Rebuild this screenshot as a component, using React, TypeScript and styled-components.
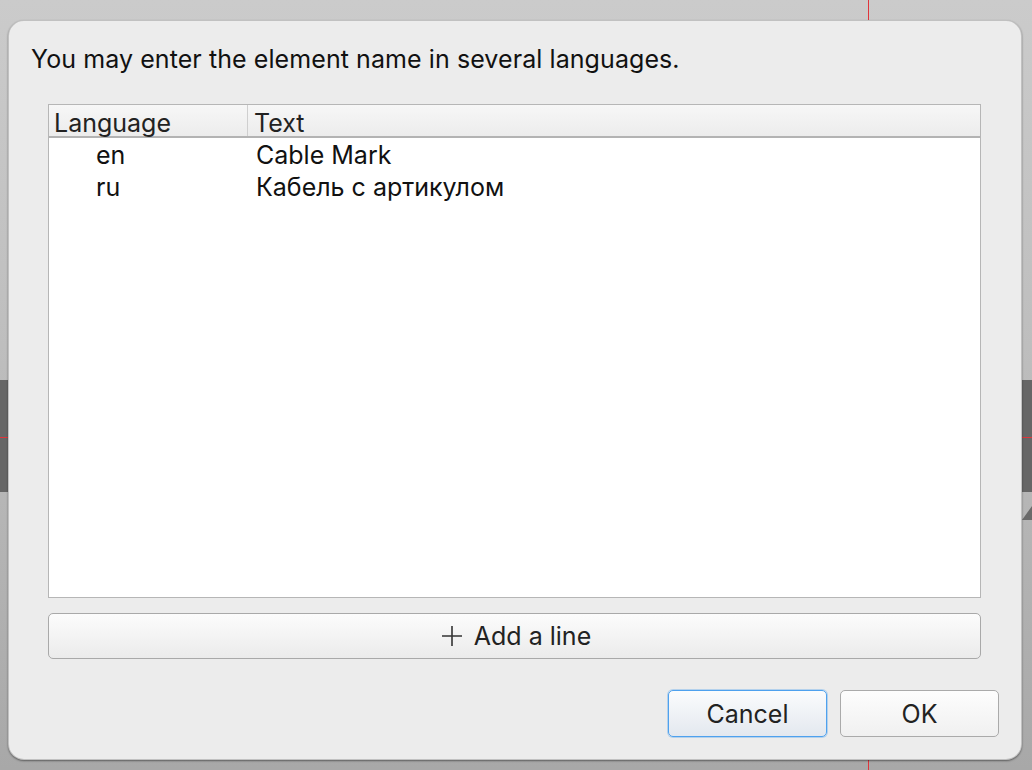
import React from 'react';
import styled, { createGlobalStyle } from 'styled-components';

const Global = createGlobalStyle`
  html, body { margin: 0; padding: 0; }
  body {
    width: 1032px;
    height: 770px;
    overflow: hidden;
    font-family: Inter, "Noto Sans", "Liberation Sans", sans-serif;
    color: #1a1a1a;
  }
  * { box-sizing: border-box; }
`;

const Desktop = styled.div`
  position: relative;
  width: 1032px;
  height: 770px;
  padding: 20px 10px 10px 8px;
  background: linear-gradient(180deg, #cbcbcb 0%, #bebebe 45%, #a8a8a8 100%);
  overflow: hidden;
`;

const DarkBand = styled.div`
  position: absolute;
  left: 0;
  right: 0;
  top: 380px;
  height: 112px;
  background: #666666;
`;

const RedLine = styled.div<{ $vertical?: boolean }>`
  position: absolute;
  background: #e0353b;
  ${(p) =>
    p.$vertical
      ? 'left: 868px; top: 0; bottom: 0; width: 1px;'
      : 'top: 437px; left: 0; right: 0; height: 1px;'}
`;

const Corner = styled.div`
  position: absolute;
  right: 0;
  top: 506px;
  width: 0;
  height: 0;
  border-left: 10px solid transparent;
  border-bottom: 14px solid #6a6a6a;
`;

const Dialog = styled.div`
  position: relative;
  z-index: 1;
  width: 1014px;
  height: 740px;
  border-radius: 16px;
  background: #ececec;
  border: 1px solid rgba(0, 0, 0, 0.18);
  box-shadow: 0 1px 2px rgba(0, 0, 0, 0.45);
  display: flex;
  flex-direction: column;
  padding: 0 22px 22px 39px;
`;

const Title = styled.div`
  margin: 22px 0 0 -17px;
  font-size: 25px;
  line-height: 32px;
  height: 32px;
  letter-spacing: 0.08px;
  color: #111;
`;

const Table = styled.div`
  margin-top: 29px;
  width: 933px;
  height: 494px;
  border: 1px solid #b6b6b6;
  background: #ffffff;
  display: flex;
  flex-direction: column;
`;

const HeaderRow = styled.div`
  display: grid;
  grid-template-columns: 199px 1fr;
  height: 33px;
  background: linear-gradient(180deg, #f7f7f7 0%, #ececec 100%);
  border-bottom: 2px solid #b3b3b3;
`;

const HeaderCell = styled.div<{ $divider?: boolean }>`
  font-size: 25px;
  line-height: 36px;
  height: 31px;
  overflow: visible;
  padding-left: ${(p) => (p.$divider ? '6px' : '5px')};
  color: #222;
  border-right: ${(p) => (p.$divider ? 'none' : '1px solid #cfcfcf')};
`;

const Row = styled.div`
  display: grid;
  grid-template-columns: 199px 1fr;
  height: 32px;
`;

const Cell = styled.div<{ $code?: boolean }>`
  font-size: 25px;
  line-height: 35px;
  height: 32px;
  padding-left: ${(p) => (p.$code ? '47px' : '8px')};
  color: #111;
`;

const AddButton = styled.button`
  margin-top: 15px;
  width: 933px;
  height: 46px;
  border: 1px solid #a9a9a9;
  border-radius: 5px;
  background: linear-gradient(180deg, #fcfcfc 0%, #ebebeb 100%);
  font-family: inherit;
  font-size: 25px;
  color: #222;
  display: flex;
  align-items: center;
  justify-content: center;
  gap: 11px;
  padding: 0 0 0 3px;
`;

const Footer = styled.div`
  margin-top: auto;
  display: flex;
  justify-content: flex-end;
  gap: 13px;
`;

const DialogButton = styled.button<{ $focused?: boolean }>`
  width: 159px;
  height: 47px;
  border-radius: 5px;
  border: 1px solid ${(p) => (p.$focused ? '#4ea1ee' : '#aaaaaa')};
  box-shadow: ${(p) => (p.$focused ? '0 0 0 1px rgba(78,161,238,0.35)' : 'none')};
  background: ${(p) =>
    p.$focused
      ? 'linear-gradient(180deg, #fbfcfd 0%, #e3e8ef 100%)'
      : 'linear-gradient(180deg, #fdfdfd 0%, #f0f0f0 100%)'};
  font-family: inherit;
  font-size: 25px;
  color: #222;
  padding: 0;
`;

const PlusIcon = () => (
  <svg width="22" height="22" viewBox="0 0 22 22" aria-hidden>
    <path d="M11 1v20M1 11h20" stroke="#333" strokeWidth="1.6" fill="none" />
  </svg>
);

const rows = [
  { code: 'en', text: 'Cable Mark' },
  { code: 'ru', text: 'Кабель с артикулом' },
];

export default function App() {
  return (
    <>
      <Global />
      <Desktop>
        <DarkBand />
        <RedLine $vertical />
        <RedLine />
        <Corner />
        <Dialog>
          <Title>You may enter the element name in several languages.</Title>
          <Table>
            <HeaderRow>
              <HeaderCell>Language</HeaderCell>
              <HeaderCell $divider>Text</HeaderCell>
            </HeaderRow>
            {rows.map((r) => (
              <Row key={r.code}>
                <Cell $code>{r.code}</Cell>
                <Cell>{r.text}</Cell>
              </Row>
            ))}
          </Table>
          <AddButton>
            <PlusIcon />
            <span>Add a line</span>
          </AddButton>
          <Footer>
            <DialogButton $focused>Cancel</DialogButton>
            <DialogButton>OK</DialogButton>
          </Footer>
        </Dialog>
      </Desktop>
    </>
  );
}
